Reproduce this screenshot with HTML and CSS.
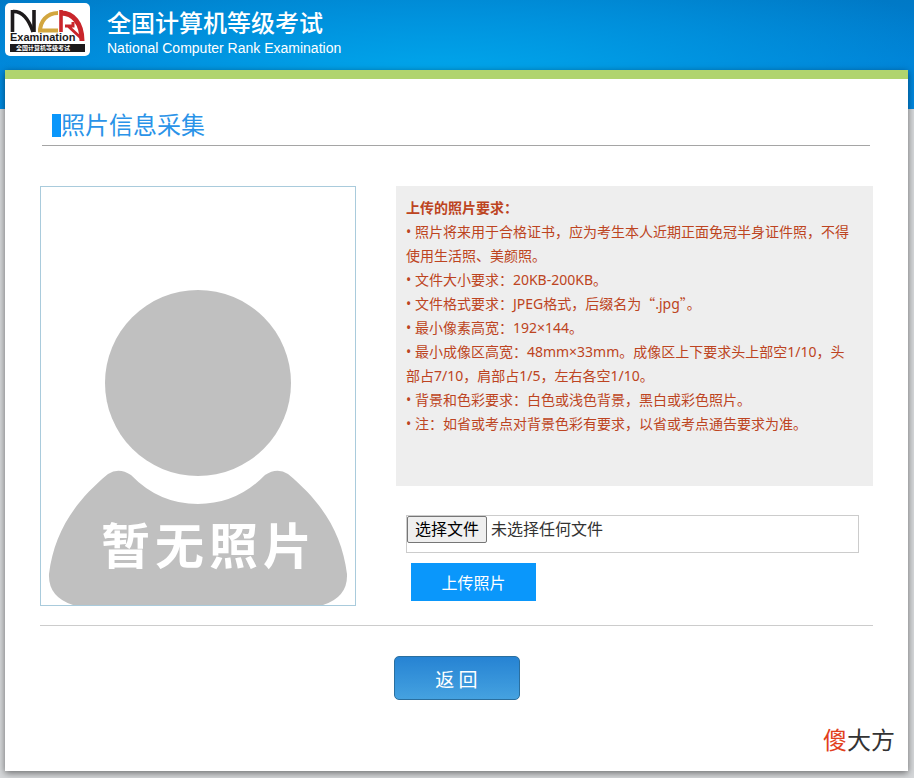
FILE: index.html
```html
<!DOCTYPE html>
<html lang="zh-CN">
<head>
<meta charset="utf-8">
<meta name="viewport" content="width=device-width, initial-scale=1">
<title>全国计算机等级考试</title>
<link rel="stylesheet" href="styles.css">
</head>
<body>
<header class="site-header">
  <svg class="logo" viewBox="0 0 85 53" role="img" aria-label="NCR Examination">
    <rect width="85" height="53" rx="5" fill="#fff"/>
    <g fill="none">
      <path d="M7.500 29V7M29 29V7" stroke="#1d1a1b" stroke-width="3.600"/>
      <path d="M8 8.500C18 8 24 17 28 29" stroke="#1d1a1b" stroke-width="3.400"/>
      <path d="M35 29C35 18 42 10 53 10M33 27.500H53" stroke="#d2a63f" stroke-width="4"/>
      <path d="M56 29V7" stroke="#c9252b" stroke-width="3.600"/>
      <path d="M56 10C68 10 77 20 77 38" stroke="#c9252b" stroke-width="5"/>
      <path d="M60 23H68V19M63 23L76 35" stroke="#c9252b" stroke-width="3"/>
    </g>
    <text class="logo-name" x="5" y="38">Examination</text>
    <rect x="5" y="41" width="75" height="8" fill="#1d1a1b"/>
    <text class="logo-sub" x="11" y="47">全国计算机等级考试</text>
  </svg>
  <div class="brand">
    <div class="brand-zh">全国计算机等级考试</div>
    <div class="brand-en">National Computer Rank Examination</div>
  </div>
</header>
<main class="card">
  <h1 class="title">照片信息采集</h1>
  <div class="content">
    <div class="photo">
      <svg class="avatar" viewBox="0 0 314 418" role="img" aria-label="暂无照片">
        <circle cx="157" cy="196" r="93" fill="#c0c0c0"/>
        <path d="M67 287Q78 280 90 288Q118 317 157 317Q196 317 224 288Q236 280 247 287C282 316 301 347 306 387Q307 410 282 418H32Q7 410 8 387C13 347 32 316 67 287Z" fill="#c0c0c0"/>
        <text class="avatar-text" y="377"><tspan x="60">暂</tspan><tspan x="114">无</tspan><tspan x="168">照</tspan><tspan x="222">片</tspan></text>
      </svg>
    </div>
    <div class="side">
      <section class="tips">
        <h2 class="tips-title">上传的照片要求：</h2>
        <p>• 照片将来用于合格证书，应为考生本人近期正面免冠半身证件照，不得使用生活照、美颜照。</p>
        <p>• 文件大小要求：20KB-200KB。</p>
        <p>• 文件格式要求：JPEG格式，后缀名为<span class="quote">“</span>.jpg<span class="quote">”</span>。</p>
        <p>• 最小像素高宽：192×144。</p>
        <p>• 最小成像区高宽：48mm×33mm。成像区上下要求头上部空1/10，头部占7/10，肩部占1/5，左右各空1/10。</p>
        <p>• 背景和色彩要求：白色或浅色背景，黑白或彩色照片。</p>
        <p>• 注：如省或考点对背景色彩有要求，以省或考点通告要求为准。</p>
      </section>
      <form class="upload">
        <label class="file">
          <input class="file-input" type="file" accept=".jpg">
          <span class="file-button">选择文件</span>
          <span class="file-status">未选择任何文件</span>
        </label>
        <button class="submit" type="button">上传照片</button>
      </form>
    </div>
  </div>
  <div class="actions"><button class="back" type="button">返 回</button></div>
  <div class="mark"><span class="mark-red">傻</span>大方</div>
</main>
</body>
</html>
```
FILE: styles.css
```css
* { box-sizing: border-box; }

body {
  margin: 0;
  padding: 0 6px 7px 5px;
  font-family: "Noto Sans", "Noto Sans CJK SC", sans-serif;
  background:
    radial-gradient(ellipse 560px 130px at 48% 80px, #00a8ec, rgba(0, 155, 228, 0.7) 50%, transparent) top / 100% 109px no-repeat,
    linear-gradient(#0079c6, #0084e0) top / 100% 109px no-repeat,
    #d6d8da;
}

.site-header {
  display: flex;
  gap: 17px;
  height: 70px;
  padding-top: 3px;
}

.logo { width: 85px; height: 53px; }
.logo-name { font: bold 11px "Liberation Sans", sans-serif; fill: #1d1a1b; }
.logo-sub { font: bold 6px "Noto Sans CJK SC", sans-serif; fill: #fff; }

.brand { padding-top: 4px; color: #fff; }
.brand-zh { font-size: 24px; font-weight: 500; line-height: 32px; }
.brand-en { font: 14px/18px "Liberation Sans", sans-serif; }

.card {
  padding: 30px 35px 14px;
  border-top: 9px solid #b0d46e;
  background: #fff;
  box-shadow: 0 2px 7px rgba(0, 0, 0, 0.5);
}

.title {
  display: flex;
  align-items: center;
  height: 37px;
  margin: 0 3px 40px 2px;
  padding: 0 0 4px 10px;
  border-bottom: 1px solid #a5a5a5;
  color: #2a93e8;
  font-size: 24px;
  font-weight: 400;
  line-height: 32px;
}

.title::before {
  content: "";
  width: 9px;
  height: 23px;
  background: #0a97fb;
}

.content {
  display: flex;
  gap: 40px;
  padding-bottom: 19px;
  border-bottom: 1px solid #ccc;
}

.photo {
  flex: none;
  width: 316px;
  border: 1px solid #a9cbdc;
}

.avatar { display: block; width: 100%; }
.avatar-text { font: bold 49px "Noto Sans CJK SC", sans-serif; fill: #fff; }

.side { flex: 1; }

.tips {
  min-height: 300px;
  padding: 10px 20px 10px 10px;
  background: #eee;
  color: #bd4421;
  font-size: 14px;
  line-height: 24px;
}

.tips p, .tips-title { margin: 0; }
.tips-title { font-size: 14px; }
.quote { font-family: "Noto Sans CJK SC", sans-serif; line-height: 1; }

.upload { padding: 29px 14px 0 10px; }

.file {
  position: relative;
  display: flex;
  align-items: flex-start;
  gap: 4px;
  height: 38px;
  border: 1px solid #ccc;
  color: #333;
  font-size: 16px;
  line-height: 25px;
}

.file-input { position: absolute; width: 80px; height: 27px; opacity: 0; }

.file-button {
  padding: 0 7px;
  border: 1px solid #767676;
  border-radius: 2px;
  background: #efefef;
  color: #000;
}

.file-status { padding-top: 1px; }

.submit {
  display: block;
  width: 125px;
  height: 38px;
  margin: 10px 0 0 5px;
  border: 0;
  background: #0a97fb;
  color: #fff;
  font: 16px "Noto Sans CJK SC", sans-serif;
}

.actions { display: flex; justify-content: center; padding-top: 30px; }

.back {
  width: 126px;
  height: 44px;
  border: 1px solid #2a6f9f;
  border-radius: 5px;
  background: linear-gradient(#2683d3, #45a2e0);
  color: #fff;
  font: 19px "Noto Sans CJK SC", sans-serif;
}

.mark {
  margin: 23px -22px 0 0;
  color: #333;
  font-size: 24px;
  line-height: 34px;
  text-align: right;
}

.mark-red { color: #e2401c; }
```
